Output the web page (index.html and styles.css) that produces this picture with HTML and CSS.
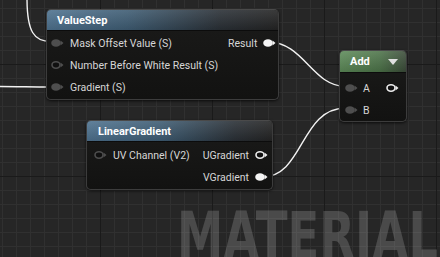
FILE: index.html
```html
<!DOCTYPE html>
<html lang="en">
<head>
    <meta charset="UTF-8">
    <title>Material Graph</title>
    <link rel="stylesheet" href="styles.css">
</head>
<body>
    <div class="graph">
        <svg class="wires" width="440" height="257" viewBox="0 0 440 257">
            <path d="M27 -2 C27 32 34 41.5 51 41.5"/>
            <path d="M0 86.5 C20 86.5 30 87 51 87"/>
            <path d="M268 42 C304 42 312 86.5 346 86.5"/>
            <path d="M262 177 C304 177 300 108 346 108"/>
        </svg>

        <div class="node value-step">
            <div class="node-title">ValueStep</div>
            <div class="node-body">
                <div class="pins">
                    <div class="pin-row">
                        <svg class="pin linked" width="13" height="10" viewBox="0 0 13 10"><ellipse cx="5" cy="5" rx="4.8" ry="3.8"/><path d="M9.5 2.5 L12.5 5 L9.5 7.5Z"/></svg>
                        <span>Mask Offset Value (S)</span>
                    </div>
                    <div class="pin-row">
                        <svg class="pin open" width="13" height="10" viewBox="0 0 13 10"><ellipse cx="5" cy="5" rx="4" ry="3.2"/><path d="M9.5 2.5 L12.5 5 L9.5 7.5Z"/></svg>
                        <span>Number Before White Result (S)</span>
                    </div>
                    <div class="pin-row">
                        <svg class="pin linked" width="13" height="10" viewBox="0 0 13 10"><ellipse cx="5" cy="5" rx="4.8" ry="3.8"/><path d="M9.5 2.5 L12.5 5 L9.5 7.5Z"/></svg>
                        <span>Gradient (S)</span>
                    </div>
                </div>
                <div class="pins outputs">
                    <div class="pin-row">
                        <span>Result</span>
                        <svg class="pin linked out" width="13" height="10" viewBox="0 0 13 10"><ellipse cx="5" cy="5" rx="4.8" ry="3.8"/><path d="M9.5 2.5 L12.5 5 L9.5 7.5Z"/></svg>
                    </div>
                </div>
            </div>
        </div>

        <div class="node add">
            <div class="node-title">Add <span class="collapse"></span></div>
            <div class="node-body">
                <div class="pins">
                    <div class="pin-row">
                        <svg class="pin linked" width="13" height="10" viewBox="0 0 13 10"><ellipse cx="5" cy="5" rx="4.8" ry="3.8"/><path d="M9.5 2.5 L12.5 5 L9.5 7.5Z"/></svg>
                        <span>A</span>
                    </div>
                    <div class="pin-row">
                        <svg class="pin linked" width="13" height="10" viewBox="0 0 13 10"><ellipse cx="5" cy="5" rx="4.8" ry="3.8"/><path d="M9.5 2.5 L12.5 5 L9.5 7.5Z"/></svg>
                        <span>B</span>
                    </div>
                </div>
                <div class="pins outputs">
                    <div class="pin-row">
                        <svg class="pin open out" width="13" height="10" viewBox="0 0 13 10"><ellipse cx="5" cy="5" rx="4" ry="3.2"/><path d="M9.5 2.5 L12.5 5 L9.5 7.5Z"/></svg>
                    </div>
                </div>
            </div>
        </div>

        <div class="node linear-gradient">
            <div class="node-title">LinearGradient</div>
            <div class="node-body">
                <div class="pins">
                    <div class="pin-row">
                        <svg class="pin open" width="13" height="10" viewBox="0 0 13 10"><ellipse cx="5" cy="5" rx="4" ry="3.2"/><path d="M9.5 2.5 L12.5 5 L9.5 7.5Z"/></svg>
                        <span>UV Channel (V2)</span>
                    </div>
                </div>
                <div class="pins outputs">
                    <div class="pin-row">
                        <span>UGradient</span>
                        <svg class="pin open out" width="13" height="10" viewBox="0 0 13 10"><ellipse cx="5" cy="5" rx="4" ry="3.2"/><path d="M9.5 2.5 L12.5 5 L9.5 7.5Z"/></svg>
                    </div>
                    <div class="pin-row">
                        <span>VGradient</span>
                        <svg class="pin linked out" width="13" height="10" viewBox="0 0 13 10"><ellipse cx="5" cy="5" rx="4.8" ry="3.8"/><path d="M9.5 2.5 L12.5 5 L9.5 7.5Z"/></svg>
                    </div>
                </div>
            </div>
        </div>

        <div class="watermark">MATERIAL</div>
    </div>
</body>
</html>
```

FILE: styles.css
```css
body {
    margin: 0;
    background: #262626;
    font-family: 'Roboto', sans-serif;
}
.graph {
    position: relative;
    width: 440px;
    height: 257px;
    overflow: hidden;
    background-color: #262626;
    background-image:
        linear-gradient(to right, #1a1a1a 1px, transparent 1px),
        linear-gradient(to bottom, #1a1a1a 1px, transparent 1px),
        linear-gradient(to right, #303030 1px, transparent 1px),
        linear-gradient(to bottom, #303030 1px, transparent 1px);
    background-size: 112px 112px, 112px 112px, 14px 14px, 14px 14px;
    background-position: 100px 64px, 100px 64px, 2px 8px, 2px 8px;
}
.wires {
    position: absolute;
    left: 0;
    top: 0;
}
.wires path {
    fill: none;
    stroke: #f2f2f2;
    stroke-width: 1.4;
}
.node {
    position: absolute;
    border-radius: 5px;
    background: linear-gradient(to bottom, #1b1b1a, #121211);
    border: 1px solid #3c3c3c;
    border-top-color: #4a4a4a;
    box-shadow: 0 1px 3px rgba(0, 0, 0, 0.7);
    overflow: hidden;
}
.node-title {
    display: flex;
    align-items: center;
    height: 20px;
    padding: 0 8px 0 10px;
    color: #fff;
    font-weight: bold;
    font-size: 11px;
    border-bottom: 1px solid #0c0c0c;
}
.node-body {
    display: flex;
    justify-content: space-between;
    padding: 1px 0 2px;
}
.pins {
    display: flex;
    flex-direction: column;
    flex-shrink: 0;
}
.pins.outputs {
    align-items: flex-end;
}
.pin-row {
    display: flex;
    align-items: center;
    gap: 6px;
    height: 22px;
    padding: 0 6px 0 4px;
    color: #d6d6d6;
    font-size: 10.5px;
    white-space: nowrap;
}
.pin {
    flex-shrink: 0;
}
.pin.linked {
    fill: #4e4e4e;
}
.pin.open {
    fill: #101010;
    stroke: #4e4e4e;
    stroke-width: 1.6;
}
.pin.open path {
    fill: #4e4e4e;
    stroke: none;
}
.pin.out.linked {
    fill: #f4f4f4;
}
.pin.out.open {
    stroke: #eeeeee;
}
.pin.out.open path {
    fill: #eeeeee;
}

.value-step {
    left: 46px;
    top: 9px;
    width: 231px;
    height: 89px;
}
.value-step .node-title {
    background:
        linear-gradient(to bottom, rgba(255, 255, 255, 0.1), rgba(0, 0, 0, 0.12)),
        linear-gradient(to right, #4f7390 0%, #3f5d74 35%, #2a3036 75%, #242424 100%);
}
.add {
    left: 339px;
    top: 50px;
    width: 66px;
    height: 70px;
}
.add .node-title {
    height: 21px;
    justify-content: space-between;
    background:
        linear-gradient(to bottom, rgba(255, 255, 255, 0.12), rgba(0, 0, 0, 0.12)),
        linear-gradient(to right, #5c8a58 0%, #4c7348 60%, #3a4a38 100%);
}
.add .node-body {
    padding-top: 4px;
}
.add .pin-row {
    gap: 5px;
    padding-left: 5px;
}
.add .outputs .pin-row {
    padding-right: 7px;
}
.collapse {
    width: 0;
    height: 0;
    border-left: 5px solid transparent;
    border-right: 5px solid transparent;
    border-top: 6px solid #e0e0e0;
}
.linear-gradient {
    left: 86px;
    top: 120px;
    width: 185px;
    height: 68px;
}
.linear-gradient .node-title {
    padding-left: 11px;
    background:
        linear-gradient(to bottom, rgba(255, 255, 255, 0.1), rgba(0, 0, 0, 0.12)),
        linear-gradient(to right, #4f7390 0%, #3f5d74 40%, #2a3036 80%, #242424 100%);
}
.linear-gradient .node-body {
    padding-top: 2px;
}
.linear-gradient .pin-row {
    padding-left: 7px;
}
.linear-gradient .outputs .pin-row {
    padding-right: 8px;
}
.watermark {
    position: absolute;
    left: 177px;
    top: 204px;
    font-family: 'DejaVu Sans', sans-serif;
    font-weight: bold;
    font-size: 66px;
    line-height: 1;
    color: rgba(255, 255, 255, 0.17);
    white-space: nowrap;
    transform: scaleX(0.705);
    transform-origin: left top;
}
```
